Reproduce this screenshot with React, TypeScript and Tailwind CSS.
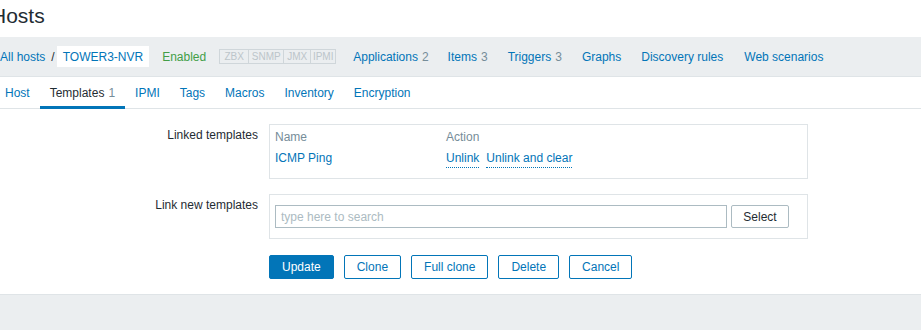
import React from "react";

const LINK = "text-[#0275b8]";

function NavItem({ label, count, className = "" }: { label: string; count?: number; className?: string }) {
  return (
    <span className={`whitespace-nowrap ${className}`}>
      <span className={LINK}>{label}</span>
      {count !== undefined && <span className="ml-[4px] text-[#768d99]">{count}</span>}
    </span>
  );
}

function OutlineButton({ children }: { children: React.ReactNode }) {
  return (
    <button className="h-[24px] rounded-[2px] border border-[#0275b8] bg-white px-[12px] text-[12px] leading-none text-[#0275b8]">
      {children}
    </button>
  );
}

export default function App() {
  const tabs = ["Host", "Templates", "IPMI", "Tags", "Macros", "Inventory", "Encryption"];

  return (
    <div className="flex min-h-[330px] w-[921px] flex-col overflow-hidden bg-white font-['Liberation_Sans',Arial,sans-serif] text-[12px] text-[#1f2c33]">
      {/* Title */}
      <div className="h-[37px] pt-[4px]">
        <h1 className="ml-[-9px] text-[21px] leading-[24px] text-[#1f2c33]">Hosts</h1>
      </div>

      {/* Host navigation */}
      <div className="flex h-[40px] items-center border-b border-[#dfe4e7] bg-[#ebeef0] leading-[16px]">
        <span className={LINK}>All hosts</span>
        <span className="ml-[6px] text-[#1f2c33]">/</span>
        <span className={`ml-[2px] flex h-[21px] items-center bg-white px-[6px] ${LINK}`}>TOWER3-NVR</span>
        <span className="ml-[13px] text-[#429e47]">Enabled</span>
        <span className="ml-[13px] flex h-[15px] border border-[#cfd6da] text-[10px] leading-[13px] text-[#bcc5ca]">
          <span className="w-[28px] text-center">ZBX</span>
          <span className="w-[35px] border-l border-[#cfd6da] text-center">SNMP</span>
          <span className="w-[27px] border-l border-[#cfd6da] text-center">JMX</span>
          <span className="w-[25px] border-l border-[#cfd6da] text-center">IPMI</span>
        </span>
        <NavItem label="Applications" count={2} className="ml-[17px]" />
        <NavItem label="Items" count={3} className="ml-[19px]" />
        <NavItem label="Triggers" count={3} className="ml-[20px]" />
        <NavItem label="Graphs" className="ml-[20px]" />
        <NavItem label="Discovery rules" className="ml-[20px]" />
        <NavItem label="Web scenarios" className="ml-[21px]" />
      </div>

      {/* Tabs */}
      <div className="flex h-[32px] border-b border-[#dfe4e7]">
        <div className="ml-[-5px] flex">
          {tabs.map((t) => {
            const active = t === "Templates";
            return (
              <div key={t} className="relative flex h-[31px] items-center px-[10px]">
                <span className={active ? "text-[#1f2c33]" : LINK}>{t}</span>
                {active && <span className="ml-[4px] text-[#768d99]">1</span>}
                {active && <span className="absolute bottom-[-1px] left-0 right-0 h-[3px] bg-[#0275b8]" />}
              </div>
            );
          })}
        </div>
      </div>

      {/* Form */}
      <div className="mt-[15px] flex flex-col leading-[16px]">
        <div className="grid grid-cols-[258px_539px] gap-x-[11px]">
          <div className="pt-[3px] text-right">Linked templates</div>
          <div className="h-[55px] border border-[#dfe4e7] px-[5px] pt-[4px]">
            <div className="grid grid-cols-[171px_1fr] text-[#768d99]">
              <span>Name</span>
              <span>Action</span>
            </div>
            <div className="mt-[5px] grid grid-cols-[171px_1fr]">
              <span className={LINK}>ICMP Ping</span>
              <span className="flex gap-[7px]">
                <span className={`border-b border-dotted border-[#0275b8] leading-[17px] ${LINK}`}>Unlink</span>
                <span className={`border-b border-dotted border-[#0275b8] leading-[17px] ${LINK}`}>Unlink and clear</span>
              </span>
            </div>
          </div>
        </div>

        <div className="mt-[15px] grid grid-cols-[258px_539px] gap-x-[11px]">
          <div className="pt-[3px] text-right">Link new templates</div>
          <div className="flex h-[45px] items-start gap-[4px] border border-[#dfe4e7] px-[5px] pt-[10px]">
            <div className="flex h-[23px] w-[452px] items-center border border-[#acbbc2] px-[5px] text-[#acbbc2]">
              type here to search
            </div>
            <button className="h-[23px] w-[58px] rounded-[2px] border border-[#acbbc2] bg-white text-[12px] text-[#1f2c33]">
              Select
            </button>
          </div>
        </div>

        <div className="mt-[16px] flex gap-[10px] pl-[269px]">
          <button className="h-[24px] rounded-[2px] border border-[#0275b8] bg-[#0275b8] px-[12px] text-[12px] leading-none text-white">
            Update
          </button>
          <OutlineButton>Clone</OutlineButton>
          <OutlineButton>Full clone</OutlineButton>
          <OutlineButton>Delete</OutlineButton>
          <OutlineButton>Cancel</OutlineButton>
        </div>
      </div>

      {/* Footer area */}
      <div className="mt-[15px] flex-1 border-t border-[#dfe4e7] bg-[#ebeef0]" />
    </div>
  );
}
